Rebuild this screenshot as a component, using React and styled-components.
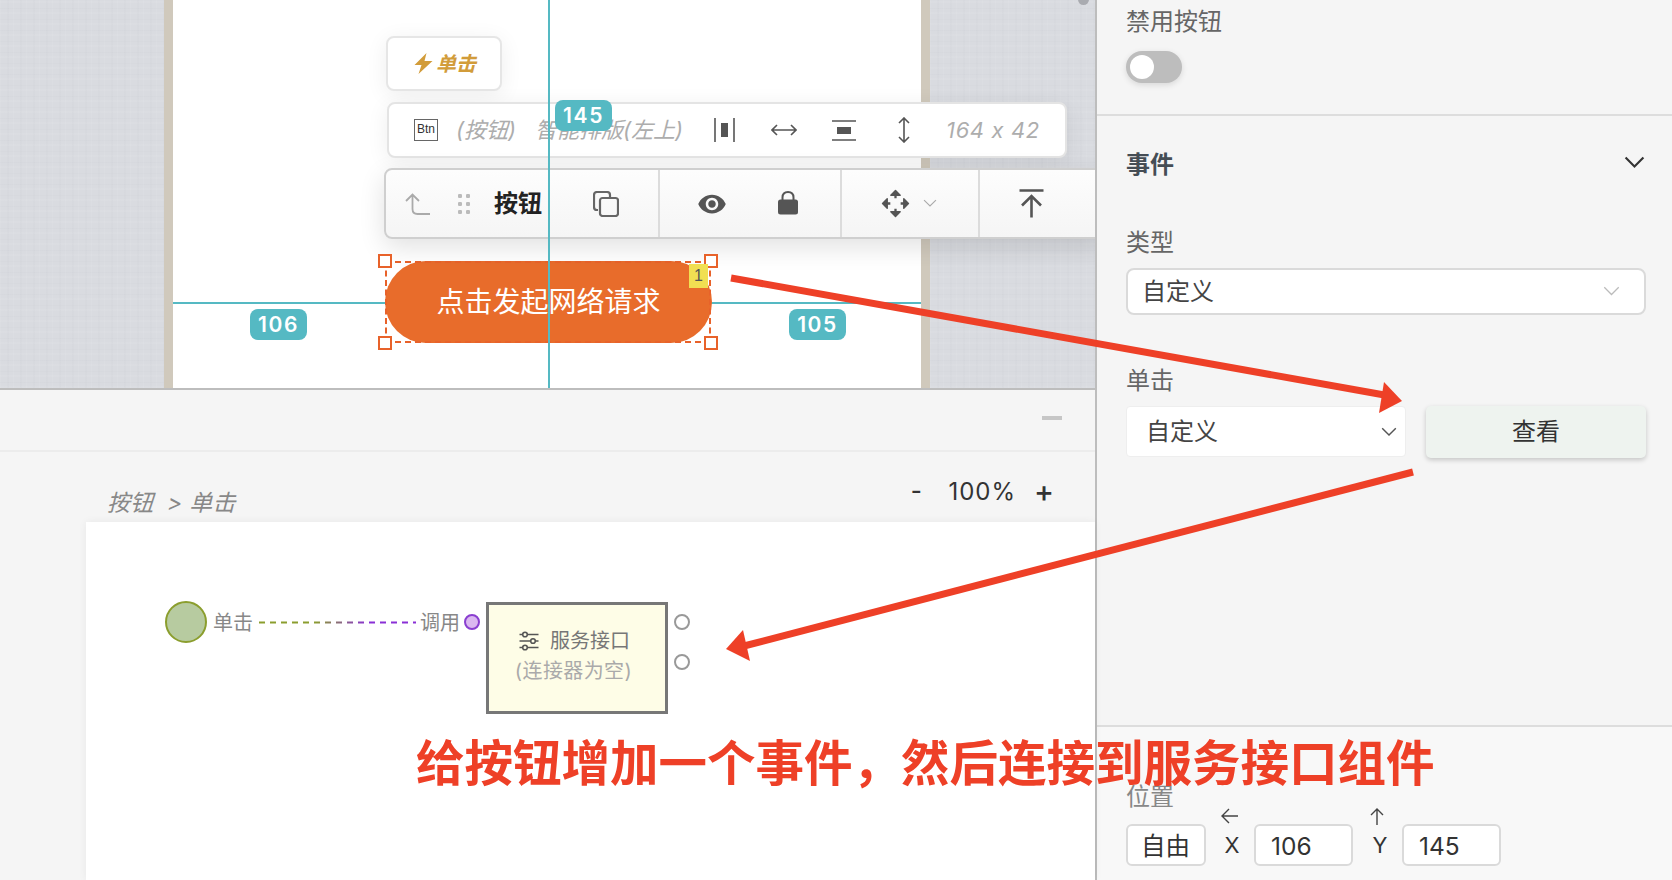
import React from 'react';
import styled, { createGlobalStyle } from 'styled-components';

const FONT = `Inter, "Noto Sans CJK SC", "Noto Sans", sans-serif`;

const Global = createGlobalStyle`
  html, body { margin: 0; padding: 0; background: #f5f5f5; overflow: hidden; }
  body { font-family: ${FONT}; font-feature-settings: "calt" 0; }
  * { box-sizing: border-box; }
`;

const Page = styled.div`
  position: relative;
  width: 1672px;
  height: 880px;
  overflow: hidden;
  display: grid;
  grid-template-columns: 1095px 1fr;
`;

const LeftColumn = styled.div`
  display: flex;
  flex-direction: column;
  min-width: 0;
  height: 880px;
`;

/* ---------- top stage ---------- */
const Stage = styled.div`
  position: relative;
  height: 388px;
  flex: none;
  overflow: hidden;
  display: flex;
`;
const Fabric = styled.div`
  flex: ${p => (p.$grow ? 1 : 'none')};
  width: ${p => p.$w || 0}px;
  background-color: #d9dbe0;
  background-image:
    repeating-linear-gradient(90deg, rgba(255,255,255,.06) 0 1px, transparent 1px 7px, rgba(120,125,135,.025) 7px 9px, transparent 9px 13px),
    repeating-linear-gradient(0deg, rgba(255,255,255,.05) 0 2px, transparent 2px 5px, rgba(120,125,135,.025) 5px 6px, transparent 6px 11px);
`;
const Frame = styled.div`
  width: 9px;
  flex: none;
  background: #d0c9bc;
`;
const Paper = styled.div`
  width: 748px;
  flex: none;
  background: #fff;
`;
const GuideV = styled.div`
  position: absolute;
  left: 548px;
  top: 0;
  bottom: 0;
  width: 2px;
  background: #55b9c3;
  z-index: 4;
`;
const GuideH = styled.div`
  position: absolute;
  left: 173px;
  width: 748px;
  top: 302px;
  height: 2px;
  background: #55b9c3;
`;
const Measure = styled.div`
  position: absolute;
  left: ${p => p.$x}px;
  top: ${p => p.$y}px;
  width: 57px;
  height: 31px;
  border-radius: 8px;
  background: #55b9c3;
  color: #fff;
  font: 600 21px/32px ${FONT};
  letter-spacing: 1.6px;
  text-align: center;
  z-index: 6;
`;
const EventChip = styled.div`
  position: absolute;
  left: 386px;
  top: 36px;
  width: 116px;
  height: 55px;
  background: #fff;
  border: 2px solid #e6e6e6;
  border-radius: 8px;
  box-shadow: 0 4px 22px rgba(0,0,0,.07);
  display: flex;
  align-items: center;
  padding-left: 26px;
  gap: 3px;
  color: #d29c3a;
  font: italic 600 20px/1 ${FONT};
  z-index: 2;
`;
const InfoBar = styled.div`
  position: absolute;
  left: 387px;
  top: 102px;
  width: 680px;
  height: 56px;
  background: #fff;
  border: 2px solid #e4e4e4;
  border-radius: 8px;
  box-shadow: 0 4px 22px rgba(0,0,0,.07);
  display: flex;
  align-items: center;
  padding-left: 25px;
  z-index: 2;
`;
const InfoText = styled.span`
  margin-left: ${p => p.$ml || 0}px;
  color: #adadad;
  font: italic 400 22px/1 ${FONT};
  letter-spacing: ${p => p.$ls || 0}px;
  white-space: nowrap;
`;
const InfoIcon = styled.svg`
  margin-left: ${p => p.$ml || 0}px;
  flex: none;
  color: #555;
  display: block;
`;
const BtnTag = styled.span`
  width: 24px;
  height: 22px;
  flex: none;
  border: 1.5px solid #666;
  color: #333;
  font: 500 12px/19px "Liberation Sans", sans-serif;
  text-align: center;
`;
const ActionBar = styled.div`
  position: absolute;
  left: 384px;
  top: 168px;
  width: 720px;
  height: 71px;
  background: linear-gradient(#fdfdfd, #f5f5f5);
  border: 2px solid #cfcfcf;
  border-radius: 8px 0 0 8px;
  box-shadow: 0 8px 26px rgba(0,0,0,.12);
  display: flex;
  z-index: 3;
`;
const ActionGroup = styled.div`
  width: ${p => p.$w}px;
  flex: none;
  display: flex;
  align-items: center;
  padding-left: ${p => p.$pl}px;
  border-right: ${p => (p.$last ? 'none' : '2px solid #dcdcdc')};
`;
const ActionTitle = styled.span`
  margin-left: 24px;
  color: #222;
  font: 700 24px/1 ${FONT};
  white-space: nowrap;
`;
const DotGrip = styled.span`
  margin-left: 28px;
  width: 12px;
  height: 20px;
  flex: none;
  background-image: radial-gradient(circle at 2px 2px, #bbb 2px, transparent 2.4px);
  background-size: 8px 8px;
`;
const EventButton = styled.div`
  position: absolute;
  left: 385px;
  top: 261px;
  width: 327px;
  height: 82px;
  border-radius: 41px;
  background: #e86c2b;
  color: #fff;
  font: 400 28px/82px ${FONT};
  text-align: center;
  z-index: 1;
`;
const SelectFrame = styled.div`
  position: absolute;
  left: 385px;
  top: 261px;
  width: 326px;
  height: 82px;
  border: 2px dashed #e8622a;
  z-index: 2;
`;
const Handle = styled.span`
  position: absolute;
  left: ${p => p.$x}px;
  top: ${p => p.$y}px;
  width: 14px;
  height: 14px;
  background: #fff;
  border: 2px solid #e8622a;
  z-index: 3;
`;
const BadgeOne = styled.span`
  position: absolute;
  left: 689px;
  top: 264px;
  width: 19px;
  height: 24px;
  background: #f1df52;
  color: #555;
  font: 400 16px/24px "Liberation Sans", sans-serif;
  text-align: center;
  z-index: 3;
`;
const ScrollThumb = styled.span`
  position: absolute;
  left: 1078px;
  top: -6px;
  width: 11px;
  height: 11px;
  border-radius: 6px;
  background: #a9abb0;
  z-index: 2;
`;

/* ---------- flow panel ---------- */
const FlowPanel = styled.div`
  flex: 1;
  display: flex;
  flex-direction: column;
  background: #f5f5f5;
  border-top: 2px solid #bdbdbd;
  min-height: 0;
`;
const FlowHeader = styled.div`
  height: 62px;
  flex: none;
  border-bottom: 2px solid #ececec;
  display: flex;
  align-items: center;
  justify-content: flex-end;
  padding: 0 33px 5px 0;
`;
const Collapse = styled.span`
  width: 20px;
  height: 4px;
  background: #c6c6c6;
`;
const FlowTools = styled.div`
  height: 70px;
  flex: none;
  display: flex;
  align-items: flex-start;
  justify-content: space-between;
  padding: 20px 40px 0 107px;
`;
const Crumb = styled.span`
  margin-top: 18px;
  color: #888;
  font: italic 400 23px/26px ${FONT};
  letter-spacing: .25px;
  white-space: pre;
`;
const ZoomBar = styled.div`
  display: flex;
  align-items: center;
  height: 38px;
  color: #333;
  font: 400 24px/38px ${FONT};
`;
const ZoomSign = styled.span`
  font-weight: 500;
  font-size: ${p => p.$s}px;
  width: 22px;
  text-align: center;
`;
const ZoomValue = styled.span`
  margin: 2px 17px 0 21px;
  letter-spacing: 1px;
`;
const Diagram = styled.div`
  position: relative;
  flex: 1;
  margin-left: 86px;
  background: #fff;
  box-shadow: 0 0 8px rgba(0,0,0,.06);
`;
const StartNode = styled.span`
  position: absolute;
  left: 79px;
  top: 79px;
  width: 42px;
  height: 42px;
  border-radius: 50%;
  background: #b7cba0;
  border: 2px solid #8b9e2e;
`;
const PortLabel = styled.span`
  position: absolute;
  left: ${p => p.$x}px;
  top: 87px;
  color: #888;
  font: 400 20px/28px ${FONT};
  white-space: nowrap;
`;
const Wire = styled.svg`
  position: absolute;
  left: 173px;
  top: 96px;
`;
const InPort = styled.span`
  position: absolute;
  left: 378px;
  top: 92px;
  width: 16px;
  height: 16px;
  border-radius: 50%;
  background: #dbb8f0;
  border: 2px solid #8a3fd0;
`;
const OutPort = styled.span`
  position: absolute;
  left: 588px;
  top: ${p => p.$y}px;
  width: 16px;
  height: 16px;
  border-radius: 50%;
  background: #fff;
  border: 2px solid #999;
`;
const ServiceBox = styled.div`
  position: absolute;
  left: 400px;
  top: 80px;
  width: 182px;
  height: 112px;
  background: #fefde7;
  border: 3px solid #777;
  display: flex;
  flex-direction: column;
  align-items: center;
  padding-top: 21px;
`;
const ServiceTitle = styled.div`
  display: flex;
  align-items: center;
  gap: 10px;
  margin-left: -6px;
  color: #777;
  font: 400 20px/30px ${FONT};
`;
const ServiceNote = styled.div`
  margin-left: -7px;
  color: #aaa;
  font: 400 20px/30px ${FONT};
  letter-spacing: .4px;
  white-space: nowrap;
`;

/* ---------- right panel ---------- */
const SidePanel = styled.aside`
  border-left: 2px solid #bdbdbd;
  background: #f5f5f5;
  display: flex;
  flex-direction: column;
  height: 880px;
`;
const SideSection = styled.section`
  flex: ${p => (p.$grow ? 1 : 'none')};
  height: ${p => (p.$h ? `${p.$h}px` : 'auto')};
  padding: ${p => p.$pt}px 26px 0 29px;
  border-bottom: ${p => (p.$noline ? 'none' : '2px solid #dddddd')};
  background: ${p => p.$bg || 'transparent'};
`;
const FieldLabel = styled.div`
  margin-top: ${p => p.$mt || 0}px;
  color: ${p => p.$c || '#666'};
  font: 400 24px/34px ${FONT};
`;
const Toggle = styled.div`
  margin-top: 12px;
  width: 56px;
  height: 32px;
  border-radius: 16px;
  background: #bdbdbd;
  box-shadow: 0 2px 6px rgba(0,0,0,.12);
  padding: 4px 0 0 4px;
`;
const Knob = styled.div`
  width: 24px;
  height: 24px;
  border-radius: 50%;
  background: #fff;
`;
const SectionHead = styled.div`
  display: flex;
  align-items: center;
  justify-content: space-between;
  padding-right: 1px;
  color: #454d55;
  font: 700 24px/34px ${FONT};
`;
const HeadChevron = styled.span`
  display: flex;
  margin-top: -6px;
`;
const SelectBox = styled.div`
  margin-top: 8px;
  width: 520px;
  height: 47px;
  border: 2px solid #dadada;
  border-radius: 8px;
  background: #fff;
  display: flex;
  align-items: center;
  justify-content: space-between;
  padding: 0 24px 0 14px;
  color: #444;
  font: 400 24px/1 ${FONT};
`;
const ActionRow = styled.div`
  margin-top: 8px;
  display: flex;
  gap: 20px;
  width: 520px;
`;
const PlainSelect = styled.div`
  width: 280px;
  height: 51px;
  background: #fff;
  border: 1px solid #eee;
  border-radius: 4px;
  display: flex;
  align-items: center;
  justify-content: space-between;
  padding: 0 8px 0 19px;
  color: #444;
  font: 400 24px/1 ${FONT};
`;
const ViewButton = styled.div`
  width: 220px;
  height: 52px;
  background: #eef3ef;
  border-radius: 5px;
  box-shadow: 0 2px 5px rgba(0,0,0,.2);
  color: #333;
  font: 400 24px/52px ${FONT};
  text-align: center;
`;
const PositionRow = styled.div`
  margin-top: 10px;
  display: flex;
  align-items: center;
  height: 42px;
`;
const PosBox = styled.div`
  width: ${p => p.$w}px;
  height: 42px;
  background: #fff;
  border: 2px solid #dadada;
  border-radius: 6px;
  color: #333;
  font: 400 24.5px/40px ${FONT};
  padding-left: ${p => p.$pl}px;
`;
const Axis = styled.span`
  position: relative;
  width: 20px;
  margin-left: ${p => p.$ml}px;
  margin-right: ${p => p.$mr}px;
  text-align: center;
  color: #333;
  font: 400 22px/44px ${FONT};
`;
const AxisArrow = styled.svg`
  position: absolute;
  left: ${p => p.$x}px;
  top: -15px;
  color: #444;
`;

/* ---------- overlays ---------- */
const Annotations = styled.svg`
  position: absolute;
  inset: 0;
  z-index: 20;
  pointer-events: none;
`;
const Callout = styled.div`
  position: absolute;
  left: 416px;
  top: 726px;
  z-index: 21;
  color: #ee4027;
  font: 700 48.5px/68px "Noto Sans CJK SC", sans-serif;
  white-space: nowrap;
`;
const Watermark = styled.div`
  position: absolute;
  left: -333px;
  top: -240px;
  width: 2380px;
  display: grid;
  grid-template-columns: repeat(7, 340px);
  grid-auto-rows: 80px;
  pointer-events: none;
  z-index: 30;
`;
const WatermarkTile = styled.div`
  transform-origin: 0 0;
  transform: rotate(45deg);
  width: 0;
  height: 0;
  color: rgba(0,0,0,.02);
  font: 400 23px/31px "Liberation Sans", sans-serif;
  letter-spacing: .5px;
  white-space: nowrap;
`;

/* ---------- icons ---------- */
const Chevron = ({ size = 20, color = '#555', sw = 2 }) => (
  <svg width={size} height={size * 0.6} viewBox="0 0 20 12" fill="none" stroke={color} strokeWidth={sw}>
    <path d="M1.5 1.5 L10 10 L18.5 1.5" />
  </svg>
);

const Bolt = () => (
  <svg width="19" height="21" viewBox="0 0 18 21" fill="#d29c3a">
    <path d="M12 0 L0 12 H7 L4 21 L18 8 H10 Z" />
  </svg>
);

const Sliders = () => (
  <svg width="22" height="20" viewBox="0 0 21 20" fill="none" stroke="#555" strokeWidth="1.6">
    <path d="M1 3.5H4M9 3.5H20M1 10H12M17 10H20M1 16.5H4M9 16.5H20" />
    <circle cx="6.5" cy="3.5" r="2.3" />
    <circle cx="14.5" cy="10" r="2.3" />
    <circle cx="6.5" cy="16.5" r="2.3" />
  </svg>
);

const wmTiles = Array.from({ length: 7 * 15 });

export default function App() {
  return (
    <Page>
      <Global />
      <LeftColumn>
        <Stage>
          <Fabric $w={164} />
          <Frame />
          <Paper />
          <Frame />
          <Fabric $grow />
          <ScrollThumb />
          <GuideH />
          <GuideV />
          <Measure $x={555} $y={100}>145</Measure>
          <Measure $x={250} $y={309}>106</Measure>
          <Measure $x={789} $y={309}>105</Measure>
          <EventChip><Bolt />单击</EventChip>
          <InfoBar>
            <BtnTag>Btn</BtnTag>
            <InfoText $ml={18}>(按钮)</InfoText>
            <InfoText $ml={19}>智能排版(左上)</InfoText>
            <InfoIcon $ml={31} width="21" height="24" viewBox="0 0 21 24" fill="none" stroke="currentColor" strokeWidth="1.6">
              <path d="M1 0V24M20 0V24" />
              <rect x="7" y="5" width="7" height="14" fill="currentColor" stroke="none" />
            </InfoIcon>
            <InfoIcon $ml={36} width="26" height="14" viewBox="0 0 26 14" fill="none" stroke="currentColor" strokeWidth="1.6">
              <path d="M1 7H25M6 2L1 7L6 12M20 2L25 7L20 12" />
            </InfoIcon>
            <InfoIcon $ml={35} width="24" height="21" viewBox="0 0 24 21" fill="none" stroke="currentColor" strokeWidth="1.6">
              <path d="M0 1H24M0 20H24" />
              <rect x="5" y="7" width="14" height="7" fill="currentColor" stroke="none" />
            </InfoIcon>
            <InfoIcon $ml={41} width="14" height="26" viewBox="0 0 14 26" fill="none" stroke="currentColor" strokeWidth="1.6">
              <path d="M7 1V25M2 6L7 1L12 6M2 20L7 25L12 20" />
            </InfoIcon>
            <InfoText $ml={35} $ls={0.6}>164 x 42</InfoText>
          </InfoBar>
          <ActionBar>
            <ActionGroup $w={274} $pl={19}>
              <svg width="25" height="22" viewBox="0 0 25 22" fill="none" stroke="#aaa" strokeWidth="1.8" style={{ flex: 'none' }}>
                <path d="M1 8L7.5 1.5L14 8M7.5 1.5V16Q7.5 21 12.5 21H25" />
              </svg>
              <DotGrip />
              <ActionTitle>按钮</ActionTitle>
              <svg width="26" height="26" viewBox="0 0 26 26" fill="none" stroke="#666" strokeWidth="2.2" style={{ marginLeft: 51, flex: 'none' }}>
                <path d="M5 19H4Q1 19 1 16V4Q1 1 4 1H14Q17 1 17 4V6" />
                <rect x="7" y="7" width="18" height="18" rx="2.5" />
              </svg>
            </ActionGroup>
            <ActionGroup $w={182} $pl={37}>
              <svg width="30" height="30" viewBox="0 0 24 24" fill="#555" style={{ flex: 'none' }}>
                <path fillRule="evenodd" d="M12 4.5C7 4.5 2.73 7.61 1 12c1.73 4.39 6 7.5 11 7.5s9.27-3.11 11-7.5c-1.73-4.39-6-7.5-11-7.5zM12 17c-2.76 0-5-2.24-5-5s2.24-5 5-5 5 2.24 5 5-2.24 5-5 5zm0-8c-1.66 0-3 1.34-3 3s1.34 3 3 3 3-1.34 3-3-1.34-3-3-3z" />
              </svg>
              <svg width="20" height="25" viewBox="0 0 20 24" style={{ marginLeft: 51, marginTop: -2, flex: 'none' }}>
                <path d="M4.5 10V7Q4.5 1.5 10 1.5T15.5 7V10" fill="none" stroke="#555" strokeWidth="2" />
                <rect x="0" y="9" width="20" height="15" rx="2.5" fill="#555" />
              </svg>
            </ActionGroup>
            <ActionGroup $w={138} $pl={39}>
              <svg width="29" height="29" viewBox="0 0 28 28" fill="none" stroke="#555" strokeWidth="2.2" style={{ flex: 'none' }}>
                <path d="M14 3V25M3 14H25" strokeDasharray="6 10" strokeDashoffset="0" />
                <path d="M9.5 6L14 1.5L18.5 6Z M9.5 22L14 26.5L18.5 22Z M6 9.5L1.5 14L6 18.5Z M22 9.5L26.5 14L22 18.5Z" fill="#555" strokeLinejoin="round" strokeWidth="1.4" />
              </svg>
              <span style={{ marginLeft: 13, display: 'flex' }}><Chevron size={14} color="#aaa" sw={1.6} /></span>
            </ActionGroup>
            <ActionGroup $w={120} $pl={39} $last>
              <svg width="25" height="29" viewBox="0 0 24 29" fill="none" stroke="#555" strokeWidth="2.6" style={{ flex: 'none' }}>
                <path d="M0 1.5H24M12 28.5V7M2.5 16.5L12 7L21.5 16.5" />
              </svg>
            </ActionGroup>
          </ActionBar>
          <EventButton>点击发起网络请求</EventButton>
          <SelectFrame />
          <Handle $x={378} $y={254} />
          <Handle $x={704} $y={254} />
          <Handle $x={378} $y={336} />
          <Handle $x={704} $y={336} />
          <BadgeOne>1</BadgeOne>
        </Stage>
        <FlowPanel>
          <FlowHeader><Collapse /></FlowHeader>
          <FlowTools>
            <Crumb>{'按钮  > 单击'}</Crumb>
            <ZoomBar>
              <ZoomSign $s={24}>-</ZoomSign>
              <ZoomValue>100%</ZoomValue>
              <ZoomSign $s={30}>+</ZoomSign>
            </ZoomBar>
          </FlowTools>
          <Diagram>
            <StartNode />
            <PortLabel $x={127}>单击</PortLabel>
            <Wire width="157" height="8" viewBox="0 0 157 8">
              <defs>
                <linearGradient id="wireGrad" gradientUnits="userSpaceOnUse" x1="0" y1="0" x2="157" y2="0">
                  <stop offset="0.35" stopColor="#8b9e2e" />
                  <stop offset="0.7" stopColor="#8a2fd6" />
                </linearGradient>
              </defs>
              <path d="M0 4.5H157" stroke="url(#wireGrad)" strokeWidth="2" strokeDasharray="6 5" fill="none" />
            </Wire>
            <PortLabel $x={334}>调用</PortLabel>
            <InPort />
            <ServiceBox>
              <ServiceTitle><Sliders />服务接口</ServiceTitle>
              <ServiceNote>(连接器为空)</ServiceNote>
            </ServiceBox>
            <OutPort $y={92} />
            <OutPort $y={132} />
          </Diagram>
        </FlowPanel>
      </LeftColumn>

      <SidePanel>
        <SideSection $h={116} $pt={5}>
          <FieldLabel>禁用按钮</FieldLabel>
          <Toggle><Knob /></Toggle>
        </SideSection>
        <SideSection $h={611} $pt={32}>
          <SectionHead>事件<HeadChevron><Chevron size={21} color="#333" sw={2} /></HeadChevron></SectionHead>
          <FieldLabel $mt={44}>类型</FieldLabel>
          <SelectBox>自定义<Chevron size={17} color="#bbb" sw={1.5} /></SelectBox>
          <FieldLabel $mt={49}>单击</FieldLabel>
          <ActionRow>
            <PlainSelect>自定义<Chevron size={16} color="#555" sw={1.8} /></PlainSelect>
            <ViewButton>查看</ViewButton>
          </ActionRow>
        </SideSection>
        <SideSection $grow $noline $pt={53} $bg="#f8f8f8">
          <FieldLabel $c="#888">位置</FieldLabel>
          <PositionRow>
            <PosBox $w={80} $pl={13}>自由</PosBox>
            <Axis $ml={16} $mr={12}>
              <AxisArrow $x={-1} width="18" height="16" viewBox="0 0 18 16" fill="none" stroke="currentColor" strokeWidth="1.4">
                <path d="M17 8H1M8 1L1 8L8 15" />
              </AxisArrow>
              X
            </Axis>
            <PosBox $w={99} $pl={15}>106</PosBox>
            <Axis $ml={17} $mr={12}>
              <AxisArrow $x={0} width="14" height="17" viewBox="0 0 14 17" fill="none" stroke="currentColor" strokeWidth="1.4">
                <path d="M7 17V1M1 7L7 1L13 7" />
              </AxisArrow>
              Y
            </Axis>
            <PosBox $w={99} $pl={15}>145</PosBox>
          </PositionRow>
        </SideSection>
      </SidePanel>

      <Annotations width="1672" height="880" viewBox="0 0 1672 880">
        <path d="M731 278 L1390 396" stroke="#ee4027" strokeWidth="7" fill="none" />
        <path d="M1384 382 L1402 401 L1379 413 Z" fill="#ee4027" />
        <path d="M1413 472 L740 647" stroke="#ee4027" strokeWidth="7" fill="none" />
        <path d="M743 630 L726 649 L750 661 Z" fill="#ee4027" />
      </Annotations>
      <Callout>给按钮增加一个事件，然后连接到服务接口组件</Callout>
      <Watermark>
        {wmTiles.map((_, i) => (
          <WatermarkTile key={i}>
            moyukai05 - 2024/05/29
            <br />
            11:02:11
          </WatermarkTile>
        ))}
      </Watermark>
    </Page>
  );
}
